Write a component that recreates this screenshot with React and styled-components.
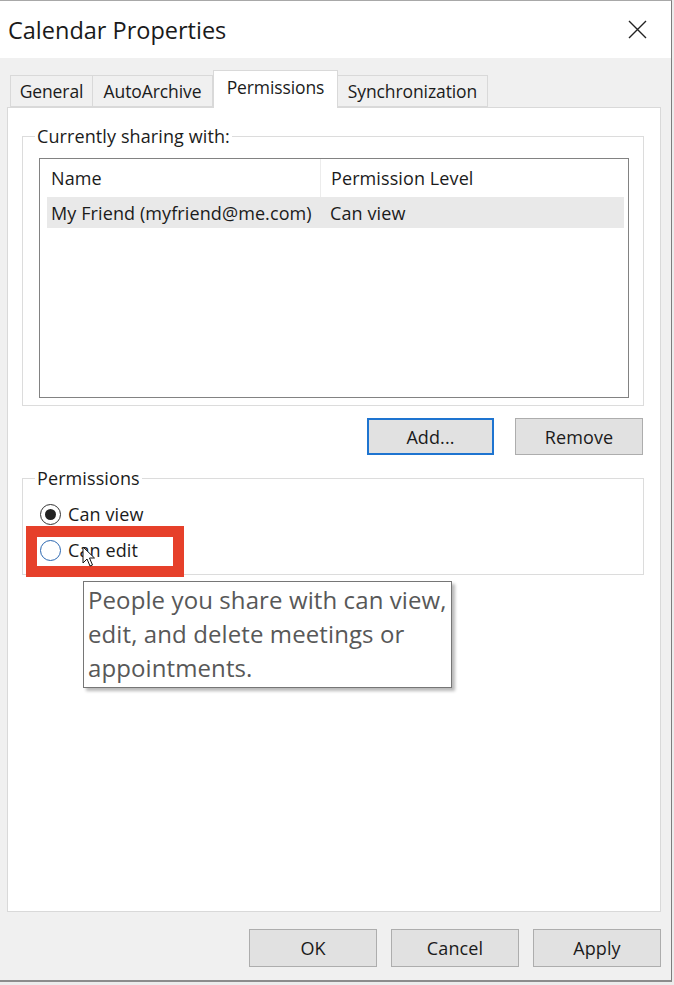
import React from "react";
import styled, { createGlobalStyle } from "styled-components";

const GlobalStyle = createGlobalStyle`
  html, body {
    margin: 0;
    padding: 0;
    background: #ffffff;
  }
  body {
    font-family: "Open Sans", "Noto Sans", sans-serif;
    color: #1b1b1b;
  }
`;

const Screen = styled.div`
  position: relative;
  width: 674px;
  height: 985px;
  overflow: hidden;
  background: #ececec;
`;

const Window = styled.div`
  width: 672px;
  height: 982px;
  box-sizing: border-box;
  border-top: 1px solid #a8a8a8;
  border-right: 1px solid #7d7d7d;
  border-bottom: 2px solid #8c8c8c;
  background: #f0f0f0;
  display: flex;
  flex-direction: column;
`;

const TitleBar = styled.div`
  height: 57px;
  flex-shrink: 0;
  background: #ffffff;
  display: flex;
  align-items: center;
  justify-content: space-between;
  padding: 0 24px 0 8px;
`;

const Title = styled.div`
  font-size: 23.5px;
  color: #1a1a1a;
`;

const Body = styled.div`
  flex: 1;
  display: flex;
  flex-direction: column;
  padding: 12px 10px 0 7px;
`;

const TabStrip = styled.div`
  display: flex;
  align-items: flex-end;
  padding-left: 3px;
  height: 37px;
  position: relative;
  z-index: 1;
`;

const Tab = styled.div`
  width: ${(p) => p.$w}px;
  height: ${(p) => (p.$active ? 38 : 32)}px;
  margin-bottom: ${(p) => (p.$active ? -1 : 0)}px;
  box-sizing: border-box;
  border: 1px solid #d9d9d9;
  border-bottom: ${(p) => (p.$active ? "none" : "1px solid #d9d9d9")};
  border-left: ${(p) => (p.$first || p.$active ? "1px solid #d9d9d9" : "none")};
  background: ${(p) => (p.$active ? "#ffffff" : "#f0f0f0")};
  display: flex;
  align-items: center;
  justify-content: center;
  padding-bottom: ${(p) => (p.$active ? 6 : 0)}px;
  font-size: 17.5px;
  color: #1b1b1b;
  letter-spacing: -0.1px;
`;

const Panel = styled.div`
  height: 805px;
  box-sizing: border-box;
  background: #ffffff;
  border: 1px solid #d9d9d9;
  padding: 16px 16px 0 14px;
  display: flex;
  flex-direction: column;
`;

const Group = styled.fieldset`
  margin: 0;
  padding: ${(p) => p.$pad};
  border: 1px solid #dcdcdc;
  min-width: 0;
`;

const Legend = styled.legend`
  font-size: 18px;
  line-height: 24px;
  padding: 0 2px;
  margin-left: -4px;
  color: #1b1b1b;
  letter-spacing: 0.1px;
`;

const ListBox = styled.div`
  height: 240px;
  box-sizing: border-box;
  border: 1px solid #828282;
  padding: 0 4px 0 7px;
  font-size: 18px;
  letter-spacing: 0.1px;
`;

const ListRow = styled.div`
  display: grid;
  grid-template-columns: 273px 1fr;
  align-items: center;
  height: ${(p) => (p.$header ? 38 : 31)}px;
  background: ${(p) => (p.$selected ? "#e9e9e9" : "transparent")};
`;

const Cell = styled.div`
  height: 100%;
  display: flex;
  align-items: center;
  padding-left: ${(p) => (p.$second ? 10 : 4)}px;
  border-left: ${(p) => (p.$divider ? "1px solid #ececec" : "none")};
  white-space: nowrap;
`;

const ButtonRow = styled.div`
  display: flex;
  justify-content: flex-end;
  gap: ${(p) => p.$gap}px;
  margin-top: ${(p) => p.$top}px;
  padding-right: ${(p) => p.$right || 0}px;
`;

const Button = styled.button`
  width: ${(p) => p.$w}px;
  height: ${(p) => p.$h}px;
  box-sizing: border-box;
  background: #e1e1e1;
  border: ${(p) => (p.$default ? "2px solid #1e74d0" : "1px solid #adadad")};
  font-family: inherit;
  font-size: 18px;
  color: #1b1b1b;
  letter-spacing: 0.1px;
  padding: 0;
`;

const RadioRow = styled.label`
  display: flex;
  align-items: center;
  height: 36px;
  gap: 7px;
  font-size: 18px;
  letter-spacing: 0.1px;
  color: #1b1b1b;
`;

const RadioCircle = styled.span`
  width: 21px;
  height: 21px;
  margin-left: 1px;
  box-sizing: border-box;
  border-radius: 50%;
  border: 1px solid ${(p) => (p.$hover ? "#2a66b0" : "#333333")};
  display: flex;
  align-items: center;
  justify-content: center;
  background: #ffffff;
  &::after {
    content: "";
    width: 11px;
    height: 11px;
    border-radius: 50%;
    background: ${(p) => (p.$checked ? "#222222" : "transparent")};
  }
`;

const Highlight = styled.div`
  position: absolute;
  left: 26px;
  top: 526px;
  width: 158px;
  height: 51px;
  box-sizing: border-box;
  border: 11px solid #e6402a;
`;

const Tooltip = styled.div`
  position: absolute;
  left: 83px;
  top: 581px;
  width: 369px;
  height: 107px;
  box-sizing: border-box;
  background: #ffffff;
  border: 1px solid #767676;
  box-shadow: 3px 3px 3px rgba(0, 0, 0, 0.28);
  padding: 1px 4px;
  font-size: 24px;
  line-height: 34px;
  color: #585858;
  letter-spacing: 0.1px;
`;

const Cursor = styled.svg`
  position: absolute;
  left: 82px;
  top: 546px;
`;

const App = () => {
  return (
    <Screen>
      <GlobalStyle />
      <Window>
        <TitleBar>
          <Title>Calendar Properties</Title>
          <svg width="19" height="19" viewBox="0 0 19 19">
            <path d="M1 1 L18 18 M18 1 L1 18" stroke="#222" strokeWidth="1.4" />
          </svg>
        </TitleBar>
        <Body>
          <TabStrip>
            <Tab $w={83} $first>General</Tab>
            <Tab $w={120}>AutoArchive</Tab>
            <Tab $w={125} $active>Permissions</Tab>
            <Tab $w={150}>Synchronization</Tab>
          </TabStrip>
          <Panel>
            <Group $pad="10px 14px 7px 16px">
              <Legend>Currently sharing with:</Legend>
              <ListBox>
                <ListRow $header>
                  <Cell>Name</Cell>
                  <Cell $second $divider>Permission Level</Cell>
                </ListRow>
                <ListRow $selected>
                  <Cell>My Friend (myfriend@me.com)</Cell>
                  <Cell $second>Can view</Cell>
                </ListRow>
              </ListBox>
            </Group>
            <ButtonRow $gap={21} $top={12} $right={1}>
              <Button $w={127} $h={37} $default>Add...</Button>
              <Button $w={128} $h={37}>Remove</Button>
            </ButtonRow>
            <div style={{ height: 11 }} />
            <Group $pad="6px 14px 6px 16px">
              <Legend>Permissions</Legend>
              <RadioRow>
                <RadioCircle $checked />
                Can view
              </RadioRow>
              <RadioRow>
                <RadioCircle $hover />
                Can edit
              </RadioRow>
            </Group>
          </Panel>
          <ButtonRow $gap={14} $top={17}>
            <Button $w={128} $h={38}>OK</Button>
            <Button $w={128} $h={38}>Cancel</Button>
            <Button $w={128} $h={38}>Apply</Button>
          </ButtonRow>
        </Body>
      </Window>
      <Highlight />
      <Tooltip>
        People you share with can view, edit, and delete meetings or appointments.
      </Tooltip>
      <Cursor width="14" height="22" viewBox="0 0 14 22">
        <path
          d="M1 1 L1 17 L5 13 L8 20 L10.5 19 L7.5 12 L12.5 12 Z"
          fill="#ffffff"
          stroke="#111111"
          strokeWidth="1"
        />
      </Cursor>
    </Screen>
  );
};

export default App;
